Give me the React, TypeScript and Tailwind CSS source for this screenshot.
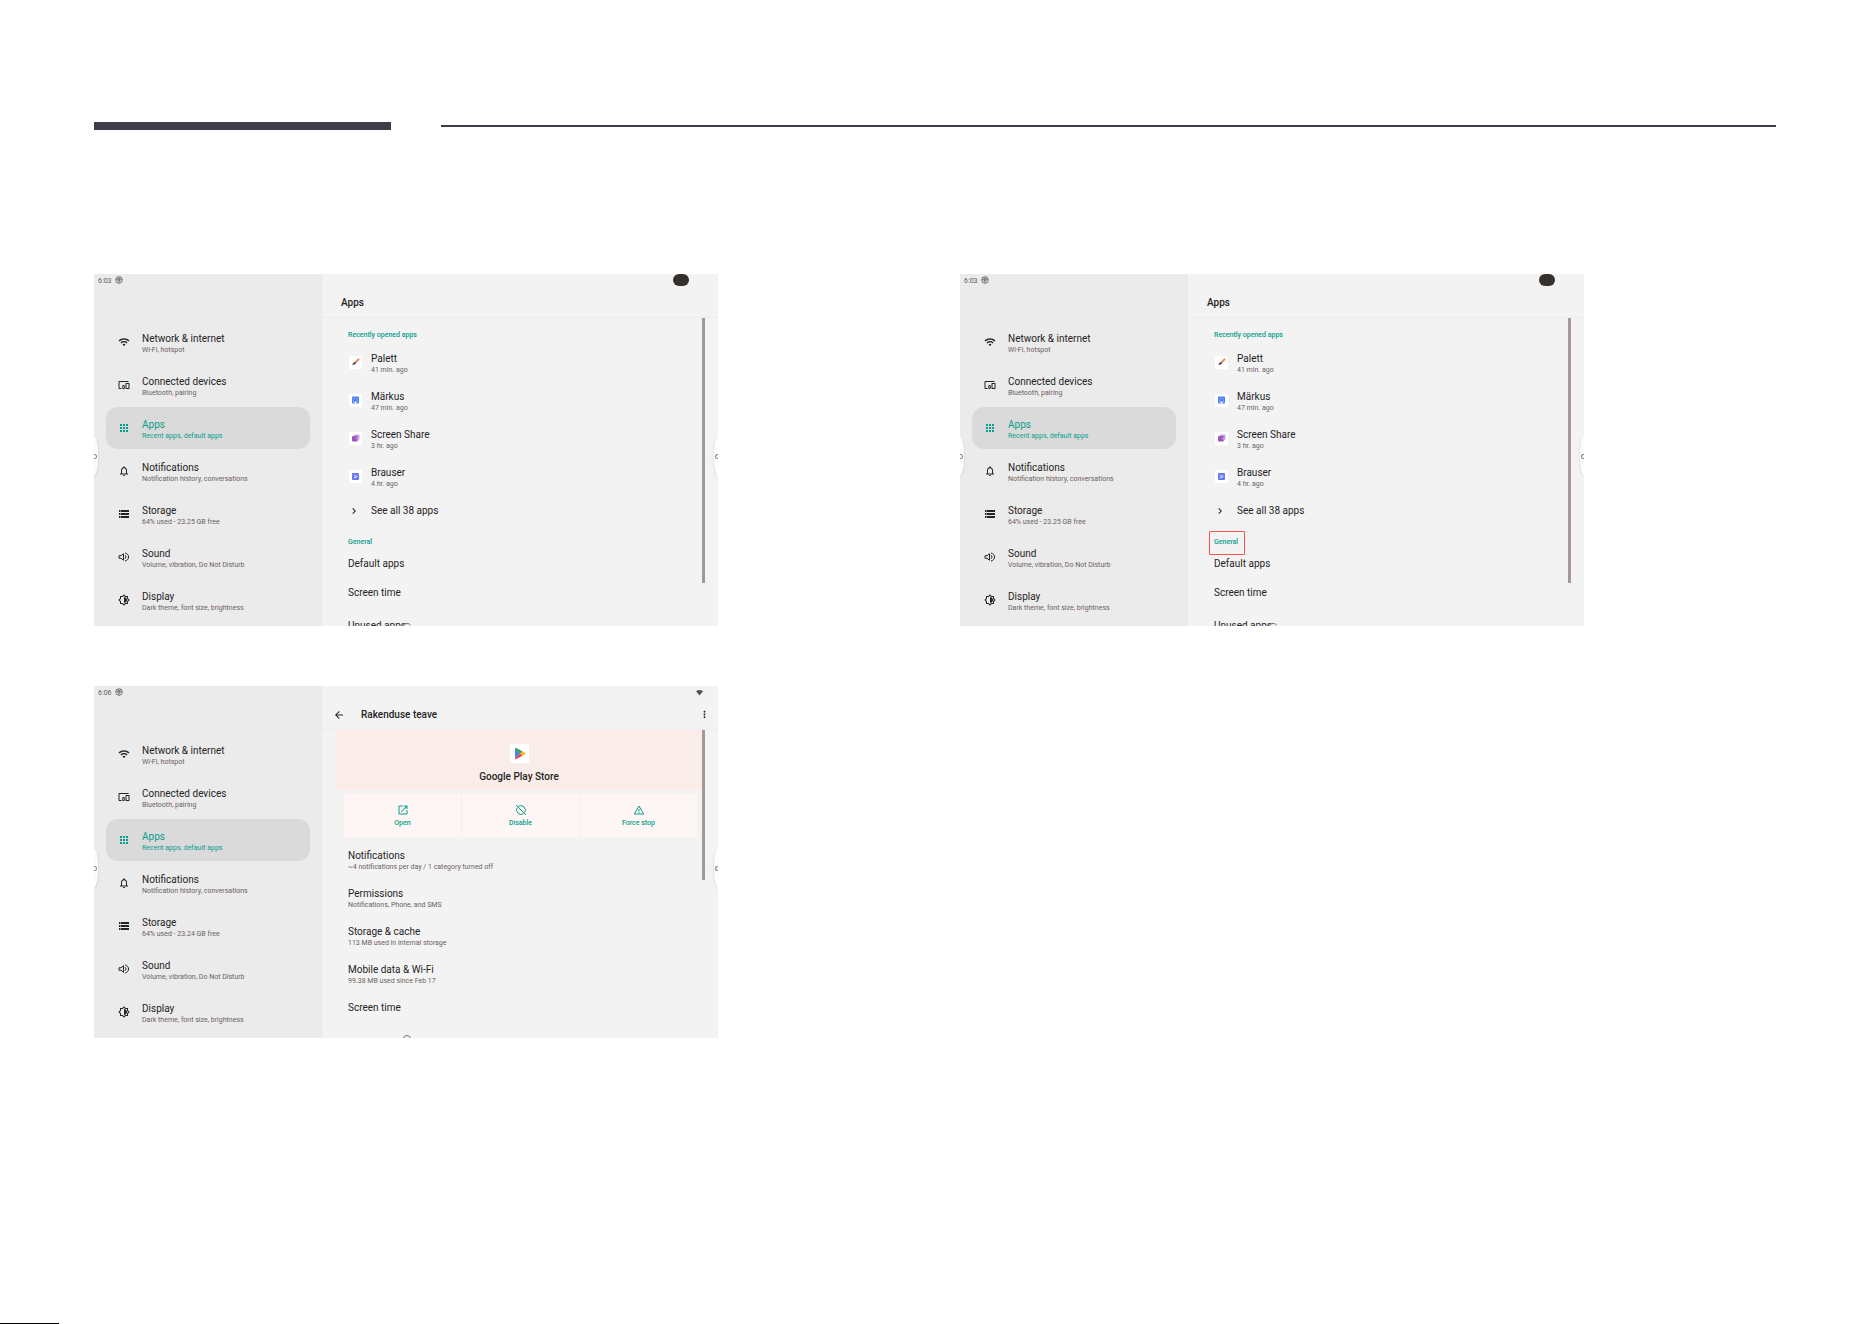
import React from "react";
import {
  MdApps,
  MdArrowBack,
  MdChevronRight,
  MdDevicesOther,
  MdMoreVert,
  MdNotificationsNone,
  MdOpenInNew,
  MdOutlineBrightnessMedium,
  MdStorage,
  MdWifi,
} from "react-icons/md";

function SoundIcon({ className }: { className?: string }) {
  return (
    <svg viewBox="0 0 24 24" className={className} fill="none" stroke="currentColor" strokeWidth="2" aria-hidden="true">
      <path d="M2 9.500v5h4l5 4v-13l-5 4z" />
      <path d="M14 8.500c2.600 1.400 2.600 5.600 0 7" />
      <path d="M14 4c9.500 1.800 9.500 14.200 0 16" />
    </svg>
  );
}

function GlobeIcon({ className }: { className?: string }) {
  return (
    <svg viewBox="0 0 24 24" className={className} fill="none" stroke="currentColor" strokeWidth="2.400" aria-hidden="true">
      <circle cx="12" cy="12" r="10" />
      <path d="M3 10h18M12 14v7M8 3.500l1 4h6l1-4M7 14h10" />
    </svg>
  );
}

function DisableIcon({ className }: { className?: string }) {
  return (
    <svg viewBox="0 0 24 24" className={className} fill="none" stroke="currentColor" strokeWidth="2" aria-hidden="true">
      <path d="M2 2l20 20" />
      <path d="M7 4.400A9.200 9.200 0 0 1 19.600 17" />
      <path d="M17 19.600A9.200 9.200 0 0 1 4.400 7" />
    </svg>
  );
}

function WarningIcon({ className }: { className?: string }) {
  return (
    <svg viewBox="0 0 24 24" className={className} fill="none" stroke="currentColor" strokeWidth="2" aria-hidden="true">
      <path d="M12 4L2.500 20h19z" />
      <path d="M12 10v5M12 16.500v2" />
    </svg>
  );
}

function SignalIcon({ className }: { className?: string }) {
  return (
    <svg viewBox="0 0 24 24" className={className} fill="currentColor" aria-hidden="true">
      <path d="M12 3C7.500 3 3.500 4.500 0 7.500L12 22 24 7.500C20.500 4.500 16.500 3 12 3z" />
    </svg>
  );
}

function PlayStoreIcon() {
  return (
    <svg viewBox="0 0 19 19" className="size-[19px]" role="img" aria-label="Google Play">
      <rect width="19" height="19" rx="1" fill="#fff" />
      <path d="M5 4.500v10L10.200 9.500z" fill="#4285f4" />
      <path d="M5 4.200c.4-.4.800-.4 1.300-.1L12.500 7.500 10.200 9.600 5 4.600z" fill="#2fa050" />
      <path d="M12.300 7.300l2.800 1.600c.5.300.5.900 0 1.200l-2.800 1.600-2.200-2.200z" fill="#fbbc04" />
      <path d="M5 14.500l5.200-5 2.200 2.200-6.100 3.400c-.5.300-1.300.1-1.300-.6z" fill="#ea4335" />
    </svg>
  );
}

function PaletteIcon() {
  return (
    <svg viewBox="0 0 13 13" className="size-[13px] rounded-[1px] bg-white" aria-hidden="true">
      <path d="M10 2.800L6 6.800" stroke="#ef7f4d" strokeWidth="1.900" />
      <path d="M6.500 6.200c.8.800.4 2.800-3.500 2.600 1-.6 1.400-3 3.500-2.600z" fill="#3c3c40" />
    </svg>
  );
}

function MarkusIcon() {
  return (
    <svg viewBox="0 0 13 13" className="size-[13px] rounded-[1px] bg-white" aria-hidden="true">
      <rect x="3" y="2.500" width="7" height="7" rx="1" fill="#4d82ec" />
      <path d="M4.500 9.500V6a2 2 0 0 1 4 0v3.500" stroke="#79a2f3" fill="none" />
      <path d="M5.500 9.500v-2h2v2z" fill="#fff" />
    </svg>
  );
}

function ScreenShareIcon() {
  return (
    <svg viewBox="0 0 13 13" className="size-[13px] rounded-[1px] bg-white" aria-hidden="true">
      <rect x="5" y="2.500" width="5.500" height="5.500" rx="1" fill="#cf9fe2" />
      <rect x="3" y="4" width="5.800" height="5.500" rx="1" fill="#9c57bd" />
      <path d="M6.500 6h2v2" stroke="#dcb5ea" fill="none" strokeWidth=".7" />
    </svg>
  );
}

function BrowserIcon() {
  return (
    <svg viewBox="0 0 13 13" className="size-[13px] rounded-[1px] bg-white" aria-hidden="true">
      <rect x="3" y="3" width="7" height="7" rx="1" fill="#6a78f5" />
      <path d="M5 5.500h1.500M6.500 6.500L8.500 6M5 7.500h2.500" stroke="#fff" strokeWidth=".8" fill="none" />
    </svg>
  );
}

type IconType = React.ComponentType<{ className?: string }>;

const categories: { title: string; note: string; Icon: IconType; active?: boolean }[] = [
  { title: "Network & internet", note: "Wi-Fi, hotspot", Icon: MdWifi },
  { title: "Connected devices", note: "Bluetooth, pairing", Icon: MdDevicesOther },
  { title: "Apps", note: "Recent apps, default apps", Icon: MdApps, active: true },
  { title: "Notifications", note: "Notification history, conversations", Icon: MdNotificationsNone },
  { title: "Storage", note: "", Icon: MdStorage },
  { title: "Sound", note: "Volume, vibration, Do Not Disturb", Icon: SoundIcon },
  { title: "Display", note: "Dark theme, font size, brightness", Icon: MdOutlineBrightnessMedium },
];

function TwoLines({ title, note }: { title: string; note: string }) {
  return (
    <span className="flex flex-col text-left whitespace-nowrap">
      <span className="text-[10px] leading-[12px]">{title}</span>
      <span className="text-[7px] leading-[10px] text-[#6b6160]">{note}</span>
    </span>
  );
}

function Sidebar({ time, storage }: { time: string; storage: string }) {
  return (
    <aside className="w-[228px] shrink-0 bg-[#ebebeb]">
      <div className="flex h-[47px] items-start gap-[3px] pt-[2px] pl-1 text-[#605a59]">
        <span className="text-[7px] leading-[10px]">{time}</span>
        <GlobeIcon className="size-2" />
      </div>
      <nav className="flex flex-col gap-px px-3">
        {categories.map(({ title, note, Icon, active }) => (
          <button
            key={title}
            type="button"
            className={
              active
                ? "flex h-[42px] shrink-0 items-start gap-3 rounded-[12px] bg-[#dadada] pt-3 pl-3 text-[#0a9e8c]"
                : "flex h-[42px] shrink-0 items-start gap-3 rounded-[12px] pt-3 pl-3 text-[#252323]"
            }
          >
            <Icon className="mt-[3px] size-3 shrink-0" />
            <span className="flex flex-col text-left whitespace-nowrap">
              <span className="text-[10px] leading-[12px]">{title}</span>
              <span className={active ? "text-[7px] leading-[10px]" : "text-[7px] leading-[10px] text-[#6b6160]"}>
                {note || storage}
              </span>
            </span>
          </button>
        ))}
      </nav>
    </aside>
  );
}

function EdgeHandles() {
  return (
    <>
      <span className="absolute top-[163px] left-0 flex h-[38px] w-1 items-center justify-start overflow-hidden bg-[#fcfcfc] shadow-sm [border-radius:0_4px_4px_0/0_16px_16px_0]">
        <span className="h-[5px] w-[3px] rounded-r-full border border-l-0 border-[#888]" />
      </span>
      <span className="absolute top-[163px] right-0 flex h-[38px] w-1 items-center justify-end overflow-hidden bg-[#fcfcfc] shadow-sm [border-radius:4px_0_0_4px/16px_0_0_16px]">
        <span className="h-[5px] w-[3px] rounded-l-full border border-r-0 border-[#888]" />
      </span>
    </>
  );
}

function Device({ time, storage, children }: { time: string; storage: string; children: React.ReactNode }) {
  return (
    <section className="relative flex aspect-[39/22] w-full max-w-[624px] overflow-hidden bg-[#f3f3f3] text-[#252323]">
      <Sidebar time={time} storage={storage} />
      <div className="relative min-w-0 flex-1">{children}</div>
      <EdgeHandles />
    </section>
  );
}

const recent = [
  { title: "Palett", note: "41 min. ago", Icon: PaletteIcon },
  { title: "Märkus", note: "47 min. ago", Icon: MarkusIcon },
  { title: "Screen Share", note: "3 hr. ago", Icon: ScreenShareIcon },
  { title: "Brauser", note: "4 hr. ago", Icon: BrowserIcon },
];

function AppsScreen({ highlight = false }: { highlight?: boolean }) {
  return (
    <Device time="6:03" storage="64% used - 23.25 GB free">
      <span className="absolute top-0 right-[29px] h-3 w-4 rounded-[6px] bg-[#35302d]" />
      <header className="h-[44px] border-b border-[#ececec] pt-[23px] pl-[19px]">
        <h1 className="text-[10px] leading-[12px] font-medium">Apps</h1>
      </header>
      <span className="absolute top-[44px] right-[13px] h-[265px] w-[3px] bg-[#a39a98]" />
      <h2 className="pt-3 pl-[26px] text-[7px] leading-[10px] font-medium text-[#0a9e8c]">Recently opened apps</h2>
      <ul className="pt-[13px] pl-[27px]">
        {recent.map(({ title, note, Icon }) => (
          <li key={title} className="h-[38px]">
            <button type="button" className="flex items-start gap-[9px]">
              <span className="mt-[3px]">
                <Icon />
              </span>
              <TwoLines title={title} note={note} />
            </button>
          </li>
        ))}
      </ul>
      <button type="button" className="flex items-center gap-[11px] pl-[26px] text-[10px] leading-[12px]">
        <MdChevronRight className="size-3" />
        See all 38 apps
      </button>
      <h2
        className={
          highlight
            ? "mt-[14px] ml-[21px] h-6 w-9 rounded-[1px] border border-[#f94f4f] pt-[5px] pl-1 text-[7px] leading-[10px] font-medium text-[#0a9e8c]"
            : "mt-[14px] ml-[21px] h-6 w-9 border border-transparent pt-[5px] pl-1 text-[7px] leading-[10px] font-medium text-[#0a9e8c]"
        }
      >
        General
      </h2>
      <div className="mt-[3px] flex flex-col items-start pl-[26px] text-[10px] leading-[12px]">
        <button type="button">Default apps</button>
        <button type="button" className="mt-[17px]">Screen time</button>
        <button type="button" className="mt-[21px] flex items-start">
          Unused apps
          <span className="mt-[3px] -ml-1 h-1 w-[9px] rounded-t-full border-t border-[#777]" />
        </button>
      </div>
    </Device>
  );
}

const actions: { label: string; Icon: IconType }[] = [
  { label: "Open", Icon: MdOpenInNew },
  { label: "Disable", Icon: DisableIcon },
  { label: "Force stop", Icon: WarningIcon },
];

const details = [
  { title: "Notifications", note: "~4 notifications per day / 1 category turned off" },
  { title: "Permissions", note: "Notifications, Phone, and SMS" },
  { title: "Storage & cache", note: "113 MB used in internal storage" },
  { title: "Mobile data & Wi-Fi", note: "99.38 MB used since Feb 17" },
];

function AppInfoScreen() {
  return (
    <Device time="6:06" storage="64% used - 23.24 GB free">
      <SignalIcon className="absolute top-[3px] right-[15px] size-[7px] text-[#555]" />
      <header className="flex h-[44px] items-start border-b border-[#ececec] pt-[23px] pr-2 pl-[11px]">
        <button type="button" aria-label="Back">
          <MdArrowBack className="size-3" />
        </button>
        <h1 className="ml-4 text-[10px] leading-[12px] font-medium">Rakenduse teave</h1>
        <button type="button" aria-label="More options" className="ml-auto">
          <MdMoreVert className="size-[11px]" />
        </button>
      </header>
      <span className="absolute top-[44px] right-[13px] h-[150px] w-[3px] bg-[#a39a98]" />
      <div className="mr-4 ml-[14px] flex h-[60px] flex-col items-center bg-[#faece9] pt-[14px]">
        <PlayStoreIcon />
        <p className="mt-2 text-[10px] leading-[12px] font-medium">Google Play Store</p>
      </div>
      <div className="mt-1 mr-[21px] ml-[22px] grid h-[43px] grid-cols-3 gap-px bg-[#f8edea]">
        {actions.map(({ label, Icon }) => (
          <button
            key={label}
            type="button"
            className="flex flex-col items-center bg-[#fef6f4] pt-[10px] text-[7px] leading-[10px] font-medium text-[#0a9e8c]"
          >
            <Icon className="size-[12px]" />
            <span className="mt-[2px]">{label}</span>
          </button>
        ))}
      </div>
      <ul className="pt-[13px] pl-[26px]">
        {details.map(({ title, note }) => (
          <li key={title} className="h-[38px]">
            <button type="button" className="block">
              <TwoLines title={title} note={note} />
            </button>
          </li>
        ))}
        <li className="text-[10px] leading-[12px]">
          <button type="button" className="block">Screen time</button>
        </li>
      </ul>
      <span className="mt-[21px] ml-[81px] block size-2 rounded-full border border-[#777]" />
    </Device>
  );
}

export default function App() {
  return (
    <div className="flex min-h-screen flex-col bg-white font-['Roboto',sans-serif]">
      <div className="grid grid-cols-[2fr_9fr] items-start gap-[50px] pt-[122px] pr-24 pl-[94px]">
        <div className="h-2 bg-[#3f3b49]" />
        <div className="mt-[3px] h-[2px] bg-[#3f3b49]" />
      </div>
      <main className="grid grid-cols-2 gap-x-[50px] gap-y-[60px] pt-36 pr-24 pl-[94px]">
        <AppsScreen />
        <AppsScreen highlight />
        <AppInfoScreen />
      </main>
      <div className="mt-auto h-px w-[59px] bg-black" />
    </div>
  );
}
